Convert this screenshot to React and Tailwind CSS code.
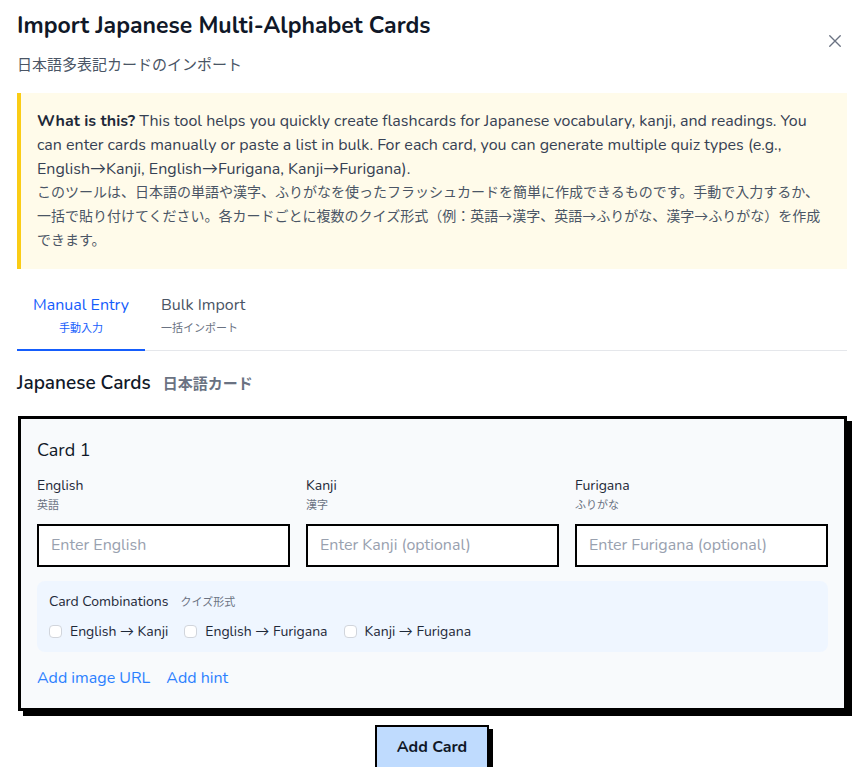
const font = { fontFamily: '"Nunito", "Lato", "Noto Sans CJK JP", sans-serif' }

function Field({ label, jp, placeholder }) {
  return (
    <div className="flex flex-col">
      <div className="text-[14px] text-gray-800 leading-5">{label}</div>
      <div className="text-[11px] text-gray-500 leading-4 mt-[2px] mb-[10px]">{jp}</div>
      <input
        placeholder={placeholder}
        className="h-[43px] border-2 border-black bg-white px-3 text-[16px] placeholder:text-gray-400 outline-none"
      />
    </div>
  )
}

function Combo({ label }) {
  return (
    <label className="flex items-center gap-2 text-[14px] text-gray-800">
      <span className="w-[13px] h-[13px] border border-gray-300 rounded-sm bg-white" />
      {label}
    </label>
  )
}

export default function App() {
  return (
    <div style={font} className="bg-white w-[864px] h-[767px] px-[17px] pt-[10px] relative">
      <button className="absolute right-[20px] top-[32px] text-gray-500">
        <svg width="18" height="18" viewBox="0 0 24 24" fill="none" stroke="currentColor" strokeWidth="1.8" strokeLinecap="round">
          <path d="M5 5l14 14M19 5L5 19" />
        </svg>
      </button>
      <h1 className="text-[23px] font-bold text-gray-900 leading-8">Import Japanese Multi-Alphabet Cards</h1>
      <div className="text-[15px] text-gray-600 mt-[12px]">日本語多表記カードのインポート</div>

      <div className="mt-[16px] bg-[#fffbea] border-l-4 border-[#facc15] pl-[16px] pr-[14px] py-[16px] text-[16px] leading-6 text-gray-700">
        <b className="text-gray-800">What is this?</b> This tool helps you quickly create flashcards for Japanese vocabulary, kanji, and readings. You can enter cards manually or paste a list in bulk. For each card, you can generate multiple quiz types (e.g., English→Kanji, English→Furigana, Kanji→Furigana).
        <div className="text-[14px] leading-6 text-gray-600">このツールは、日本語の単語や漢字、ふりがなを使ったフラッシュカードを簡単に作成できるものです。手動で入力するか、一括で貼り付けてください。各カードごとに複数のクイズ形式（例：英語→漢字、英語→ふりがな、漢字→ふりがな）を作成できます。</div>
      </div>

      <div className="mt-[24px] flex border-b border-gray-200">
        <div className="w-[128px] border-b-2 border-blue-600 text-center pb-[12px] -mb-px">
          <div className="text-[16px] text-blue-600">Manual Entry</div>
          <div className="text-[11px] text-blue-600 mt-[4px]">手動入力</div>
        </div>
        <div className="px-[16px] pb-[12px]">
          <div className="text-[16px] text-gray-600">Bulk Import</div>
          <div className="text-[11px] text-gray-500 mt-[4px]">一括インポート</div>
        </div>
      </div>

      <div className="mt-[18px] flex items-baseline gap-3">
        <span className="text-[19px] font-semibold text-gray-900">Japanese Cards</span>
        <span className="text-[15px] font-semibold text-gray-500">日本語カード</span>
      </div>

      <div className="mt-[18px] ml-px border-[3px] border-black bg-[#f8fafc] shadow-[5px_5px_0_#000] px-[16px] pt-[18px] pb-[18px]">
        <div className="text-[18px] text-gray-900">Card 1</div>
        <div className="grid grid-cols-3 gap-4 mt-[12px]">
          <Field label="English" jp="英語" placeholder="Enter English" />
          <Field label="Kanji" jp="漢字" placeholder="Enter Kanji (optional)" />
          <Field label="Furigana" jp="ふりがな" placeholder="Enter Furigana (optional)" />
        </div>
        <div className="mt-[14px] bg-[#eff6ff] rounded-lg px-[12px] py-[10px]">
          <div className="flex items-baseline gap-3">
            <span className="text-[14px] text-gray-800">Card Combinations</span>
            <span className="text-[11px] text-gray-500">クイズ形式</span>
          </div>
          <div className="flex gap-4 mt-[9px]">
            <Combo label="English → Kanji" />
            <Combo label="English → Furigana" />
            <Combo label="Kanji → Furigana" />
          </div>
        </div>
        <div className="flex gap-4 mt-[14px] text-[16px] text-blue-500">
          <span>Add image URL</span>
          <span>Add hint</span>
        </div>
      </div>

      <div className="flex justify-center mt-[14px]">
        <button className="w-[114px] h-[44px] bg-[#bfdbfe] border-2 border-black shadow-[4px_4px_0_#000] text-[16px] font-bold text-gray-900">Add Card</button>
      </div>
    </div>
  )
}
